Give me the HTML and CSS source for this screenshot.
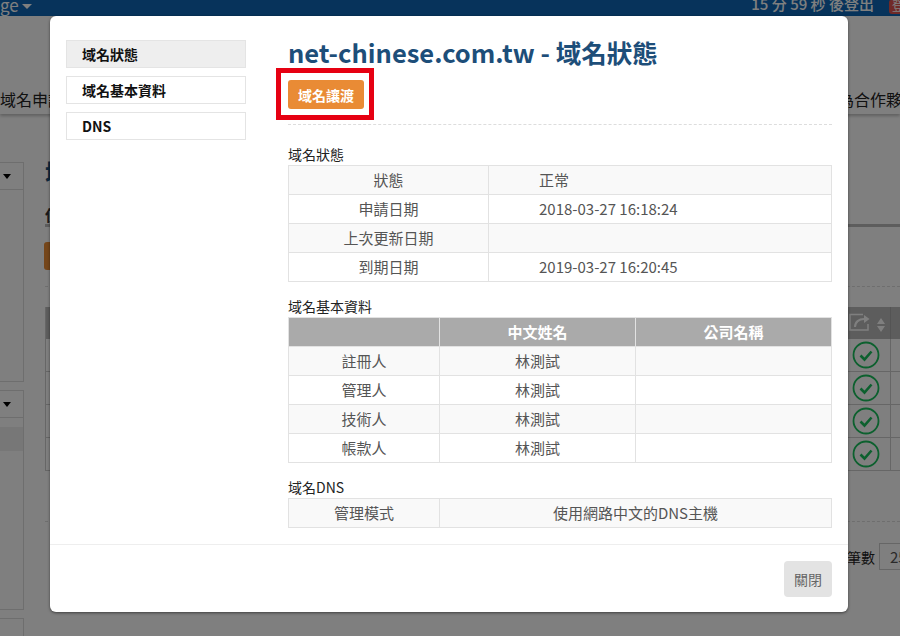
FILE: index.html
```html
<!DOCTYPE html>
<html lang="zh-Hant">
<head>
<meta charset="utf-8">
<title>域名狀態</title>
<link rel="stylesheet" href="styles.css">
</head>
<body>
<div class="page">
  <header class="topbar">
    <span class="lang">ge<i class="caret caret-light"></i></span>
    <span class="timer">15 分 59 秒 後登出</span>
    <span class="logout">登出</span>
  </header>
  <nav class="nav">
    <span>域名申請</span>
    <span class="nav-end">為合作夥</span>
  </nav>
  <div class="content">
    <aside class="side">
      <div class="side-box side-box-tall"><div class="side-head"><i class="caret"></i></div></div>
      <div class="side-box"><div class="side-head"><i class="caret"></i></div><div class="side-active"></div></div>
      <div class="side-box"></div>
    </aside>
    <main class="bg-main">
      <div class="bg-title">域</div>
      <div class="bg-tab">使</div>
      <div class="bg-btn"></div>
      <div class="bg-dash"></div>
      <div class="bg-table">
        <div class="bg-row bg-row-head">
          <span class="bg-cell-wide"></span>
          <span class="bg-cell">
            <svg class="share" viewBox="0 0 21 18" width="21" height="18"><path d="M14 1.500H1v15.500h18V11" fill="none" stroke="#fff" stroke-width="1.500"/><path d="M6 14c0-5 4-8 9-8" fill="none" stroke="#fff" stroke-width="2"/><path d="M15 2l5.500 4-5.500 4z" fill="#fff"/></svg>
            <svg class="sort" viewBox="0 0 8 14" width="8" height="14"><path d="M4 0l4 6H0zM4 14l4-6H0z" fill="#fff"/></svg>
          </span>
          <span class="bg-cell-rest"></span>
        </div>
        <div class="bg-row"><span class="bg-cell-wide"></span><span class="bg-cell"><svg class="check" viewBox="0 0 28 28" width="28" height="28"><circle cx="14" cy="14" r="12.500" fill="none" stroke="#18c05c" stroke-width="1.800"/><path d="M8.500 14.500l4 4 7-8" fill="none" stroke="#18c05c" stroke-width="2.600"/></svg></span><span class="bg-cell-rest"></span></div>
        <div class="bg-row"><span class="bg-cell-wide"></span><span class="bg-cell"><svg class="check" viewBox="0 0 28 28" width="28" height="28"><circle cx="14" cy="14" r="12.500" fill="none" stroke="#18c05c" stroke-width="1.800"/><path d="M8.500 14.500l4 4 7-8" fill="none" stroke="#18c05c" stroke-width="2.600"/></svg></span><span class="bg-cell-rest"></span></div>
        <div class="bg-row"><span class="bg-cell-wide"></span><span class="bg-cell"><svg class="check" viewBox="0 0 28 28" width="28" height="28"><circle cx="14" cy="14" r="12.500" fill="none" stroke="#18c05c" stroke-width="1.800"/><path d="M8.500 14.500l4 4 7-8" fill="none" stroke="#18c05c" stroke-width="2.600"/></svg></span><span class="bg-cell-rest"></span></div>
        <div class="bg-row"><span class="bg-cell-wide"></span><span class="bg-cell"><svg class="check" viewBox="0 0 28 28" width="28" height="28"><circle cx="14" cy="14" r="12.500" fill="none" stroke="#18c05c" stroke-width="1.800"/><path d="M8.500 14.500l4 4 7-8" fill="none" stroke="#18c05c" stroke-width="2.600"/></svg></span><span class="bg-cell-rest"></span></div>
      </div>
      <div class="bg-dash bg-dash-low"></div>
      <div class="bg-pager"><span>筆數</span><span class="bg-select">25</span></div>
    </main>
  </div>
</div>

<div class="overlay"></div>

<section class="modal">
  <div class="modal-body">
    <ul class="menu">
      <li class="menu-item menu-item-active">域名狀態</li>
      <li class="menu-item">域名基本資料</li>
      <li class="menu-item">DNS</li>
    </ul>
    <div class="detail">
      <h1 class="title">net-chinese.com.tw - 域名狀態</h1>
      <div class="actions">
        <button class="btn-transfer">域名讓渡</button>
        <span class="highlight"></span>
      </div>
      <h2 class="caption caption-first">域名狀態</h2>
      <table class="info info-status">
        <tr><td class="c-label">狀態</td><td class="c-value">正常</td></tr>
        <tr><td class="c-label">申請日期</td><td class="c-value">2018-03-27 16:18:24</td></tr>
        <tr><td class="c-label">上次更新日期</td><td class="c-value"></td></tr>
        <tr><td class="c-label">到期日期</td><td class="c-value">2019-03-27 16:20:45</td></tr>
      </table>
      <h2 class="caption">域名基本資料</h2>
      <table class="info info-contact">
        <tr><th class="c-a"></th><th class="c-b">中文姓名</th><th>公司名稱</th></tr>
        <tr><td>註冊人</td><td>林測試</td><td></td></tr>
        <tr><td>管理人</td><td>林測試</td><td></td></tr>
        <tr><td>技術人</td><td>林測試</td><td></td></tr>
        <tr><td>帳款人</td><td>林測試</td><td></td></tr>
      </table>
      <h2 class="caption">域名DNS</h2>
      <table class="info info-dns">
        <tr><td class="c-a">管理模式</td><td>使用網路中文的DNS主機</td></tr>
      </table>
    </div>
  </div>
  <footer class="modal-foot">
    <button class="btn-close">關閉</button>
  </footer>
</section>
</body>
</html>
```

FILE: styles.css
```css
* { box-sizing: border-box; }
html, body { margin: 0; height: 100%; overflow: hidden; }
body {
  width: 900px;
  height: 636px;
  background: #fff;
  color: #333;
  font-family: "Noto Sans CJK TC", "Noto Sans", sans-serif;
  font-size: 14px;
}

/* Dimmed page behind the dialog */
.page { height: 636px; overflow: hidden; }
.topbar {
  height: 16px;
  background: #0e66b6;
  display: flex;
  align-items: center;
  color: #fff;
  font-size: 15px;
  line-height: 16px;
  overflow: hidden;
}
.lang { font-size: 17px; margin-top: -6px; }
.caret {
  display: inline-block;
  width: 0;
  height: 0;
  border-left: 5px solid transparent;
  border-right: 5px solid transparent;
  border-top: 5px solid #000;
}
.caret-light { border-top-color: #fff; margin-left: 3px; vertical-align: 3px; }
.timer { margin-left: auto; margin-top: -8px; margin-right: 15px; font-weight: 500; }
.logout {
  width: 11px;
  height: 14px;
  background: #e0544e;
  border-radius: 2px 0 0 3px;
  margin-top: -2px;
  padding-left: 3px;
  overflow: hidden;
  white-space: nowrap;
  font-size: 12px;
  line-height: 12px;
}
.nav {
  height: 98px;
  display: flex;
  justify-content: space-between;
  align-items: flex-end;
  padding-bottom: 3px;
  font-size: 16px;
  color: #222;
  box-shadow: 0 2px 3px rgba(0,0,0,.25);
  background: #fff;
  overflow: hidden;
}
.nav-end { margin-right: -2px; }
.content { display: flex; padding-top: 48px; }
.side { width: 24px; flex: none; display: flex; flex-direction: column; gap: 8px; }
.side-box { border: 1px solid #ddd; border-left: 0; height: 220px; flex: none; }
.side-head { height: 27px; border-bottom: 1px solid #ddd; display: flex; justify-content: flex-end; align-items: center; padding-right: 12px; }
.side-head .caret { border-left-width: 4px; border-right-width: 4px; }
.side-active { height: 24px; margin-top: 9px; background: #eee; }
.bg-main { flex: 1; padding-left: 21px; min-width: 0; }
.bg-title { color: #1d4e79; font-size: 24px; font-weight: 700; line-height: 20px; height: 20px; }
.bg-tab { color: #333; font-size: 15px; font-weight: 700; margin-top: 22px; height: 23px; line-height: 21px; border-bottom: 3px solid #bbb; }
.bg-btn { width: 70px; height: 28px; margin-top: 15px; margin-left: -1px; background: #eb8c34; border-radius: 3px; }
.bg-dash { border-top: 1px dashed #ddd; margin-top: 16px; height: 21px; }
.bg-dash-low { margin-top: 50px; height: 1px; }
.bg-table { margin-top: 0; border-left: 1px solid #ccc; }
.bg-row { height: 33px; display: flex; border-bottom: 1px solid #ccc; align-items: center; }
.bg-row-head { height: 32px; background: #bbb; border-bottom: 0; }
.bg-cell-wide { width: 802px; flex: none; }
.bg-cell { width: 43px; flex: none; height: 100%; border-right: 1px solid #ccc; display: flex; align-items: center; padding-left: 4px; gap: 6px; }
.bg-cell-rest { flex: 1; }
.bg-row-head .bg-cell { border-right-color: #a8a8a8; padding-left: 1px; gap: 7px; }
.check { flex: none; }
.share { flex: none; margin-top: -2px; }
.sort { flex: none; margin-top: 4px; }
.bg-pager { display: flex; justify-content: flex-end; align-items: center; gap: 4px; margin-top: 21px; font-size: 14px; color: #222; }
.bg-select { width: 21px; height: 27px; flex: none; border: 1px solid #ccc; border-right: 0; padding-left: 10px; line-height: 25px; overflow: hidden; color: #555; font-size: 15px; }

.overlay { position: absolute; inset: 0; background: rgba(0,0,0,.5); }

/* Dialog */
.modal {
  position: absolute;
  left: 50px;
  top: 16px;
  width: 798px;
  height: 596px;
  background: #fff;
  border-radius: 6px;
  box-shadow: 0 1px 3px rgba(0,0,0,.5);
  display: flex;
  flex-direction: column;
}
.modal-body { flex: 1; display: flex; gap: 42px; padding: 24px 16px 0; min-height: 0; overflow: hidden; }
.menu { list-style: none; margin: 0; padding: 0; width: 180px; flex: none; display: flex; flex-direction: column; gap: 8px; }
.menu-item {
  height: 28px;
  border: 1px solid #e4e4e4;
  padding-left: 15px;
  line-height: 26px;
  font-size: 14px;
  font-weight: 700;
  color: #111;
}
.menu-item-active { background: #eee; }
.detail { flex: 1; min-width: 0; }
.title { margin: -2px 0 0; font-size: 25.500px; line-height: 28px; font-weight: 700; color: #1d4e79; }
.actions { position: relative; margin-top: 14px; height: 45px; border-bottom: 1px dashed #ddd; }
.btn-transfer {
  width: 76px;
  height: 29px;
  padding: 0;
  border: 0;
  border-radius: 3px;
  background: #e98b35;
  color: #fff;
  font-family: inherit;
  font-size: 14px;
  font-weight: 700;
  display: block;
}
.highlight { position: absolute; left: -12px; top: -12px; width: 98px; height: 52px; border: 5px solid #e60012; }
.caption { margin: 15px 0 0; font-size: 14px; font-weight: 400; line-height: 18px; color: #222; height: 20px; }
.caption-first { margin-top: 20px; }
.info { width: 544px; border-collapse: collapse; table-layout: fixed; color: #555; font-size: 15px; }
.info td, .info th { height: 29px; padding: 0; border: 1px solid #e2e2e2; text-align: center; line-height: 20px; }
.info-status tr:nth-child(odd) td,
.info-contact tr:nth-child(even) td,
.info-dns td { background: #f9f9f9; }
.info th { background: #aaa; color: #fff; font-weight: 700; }
.c-label { width: 200px; }
.info .c-value { text-align: left; padding-left: 50px; }
.c-a { width: 151px; }
.c-b { width: 196px; }
.modal-foot { height: 68px; flex: none; border-top: 1px solid #eee; display: flex; justify-content: flex-end; align-items: flex-start; padding: 16px 16px 0; }
.btn-close {
  width: 48px;
  height: 36px;
  padding: 0;
  border: 0;
  border-radius: 4px;
  background: #e3e3e3;
  color: #666;
  font-family: inherit;
  font-size: 14px;
}
```
